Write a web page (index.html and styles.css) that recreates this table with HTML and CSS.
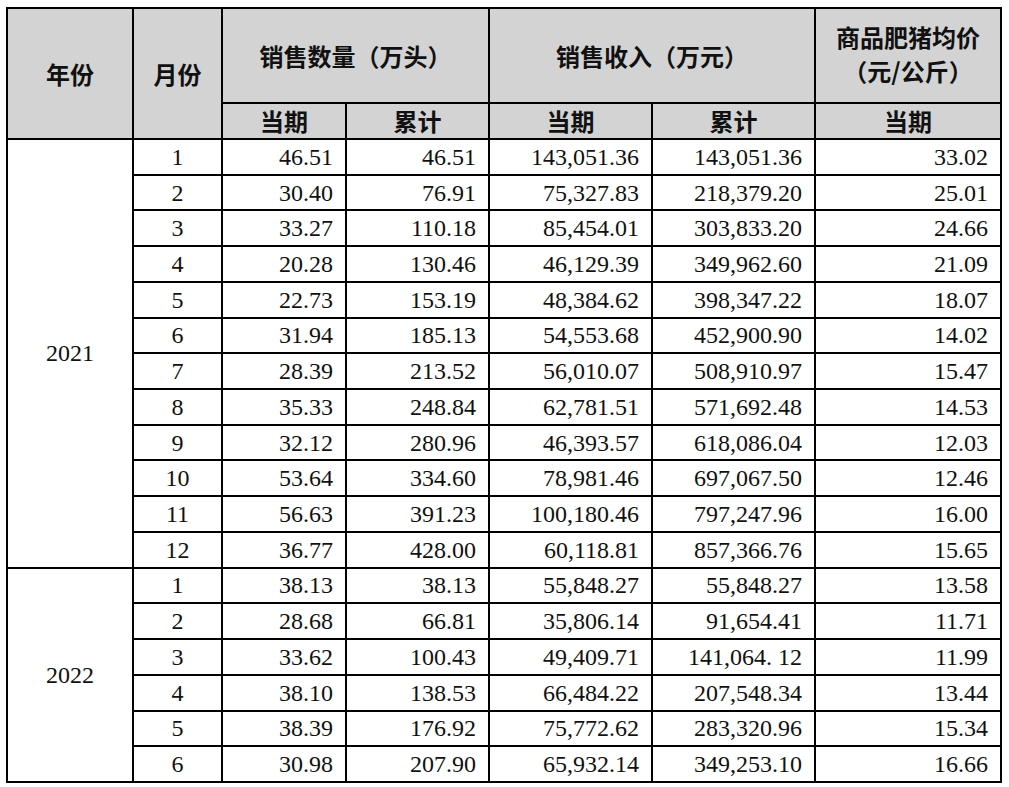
FILE: index.html
```html
<!DOCTYPE html>
<html lang="zh-CN">
<head>
<meta charset="utf-8">
<title>销售情况</title>
<link rel="stylesheet" href="styles.css">
</head>
<body>
<table class="sales">
  <colgroup>
    <col class="c-year"><col class="c-month"><col class="c-qty"><col class="c-qtysum"><col class="c-rev"><col class="c-revsum"><col class="c-price">
  </colgroup>
  <thead>
    <tr class="h1">
      <th rowspan="2">年份</th>
      <th rowspan="2">月份</th>
      <th colspan="2">销售数量（万头）</th>
      <th colspan="2">销售收入（万元）</th>
      <th class="two">商品肥猪均价<br>（元/公斤）</th>
    </tr>
    <tr class="h2">
      <th>当期</th>
      <th>累计</th>
      <th>当期</th>
      <th>累计</th>
      <th>当期</th>
    </tr>
  </thead>
  <tbody>
    <tr><td class="year" rowspan="12">2021</td><td class="m">1</td><td>46.51</td><td>46.51</td><td>143,051.36</td><td>143,051.36</td><td>33.02</td></tr>
    <tr><td class="m">2</td><td>30.40</td><td>76.91</td><td>75,327.83</td><td>218,379.20</td><td>25.01</td></tr>
    <tr><td class="m">3</td><td>33.27</td><td>110.18</td><td>85,454.01</td><td>303,833.20</td><td>24.66</td></tr>
    <tr><td class="m">4</td><td>20.28</td><td>130.46</td><td>46,129.39</td><td>349,962.60</td><td>21.09</td></tr>
    <tr><td class="m">5</td><td>22.73</td><td>153.19</td><td>48,384.62</td><td>398,347.22</td><td>18.07</td></tr>
    <tr><td class="m">6</td><td>31.94</td><td>185.13</td><td>54,553.68</td><td>452,900.90</td><td>14.02</td></tr>
    <tr><td class="m">7</td><td>28.39</td><td>213.52</td><td>56,010.07</td><td>508,910.97</td><td>15.47</td></tr>
    <tr><td class="m">8</td><td>35.33</td><td>248.84</td><td>62,781.51</td><td>571,692.48</td><td>14.53</td></tr>
    <tr><td class="m">9</td><td>32.12</td><td>280.96</td><td>46,393.57</td><td>618,086.04</td><td>12.03</td></tr>
    <tr><td class="m">10</td><td>53.64</td><td>334.60</td><td>78,981.46</td><td>697,067.50</td><td>12.46</td></tr>
    <tr><td class="m">11</td><td>56.63</td><td>391.23</td><td>100,180.46</td><td>797,247.96</td><td>16.00</td></tr>
    <tr><td class="m">12</td><td>36.77</td><td>428.00</td><td>60,118.81</td><td>857,366.76</td><td>15.65</td></tr>
    <tr><td class="year" rowspan="6">2022</td><td class="m">1</td><td>38.13</td><td>38.13</td><td>55,848.27</td><td>55,848.27</td><td>13.58</td></tr>
    <tr><td class="m">2</td><td>28.68</td><td>66.81</td><td>35,806.14</td><td>91,654.41</td><td>11.71</td></tr>
    <tr><td class="m">3</td><td>33.62</td><td>100.43</td><td>49,409.71</td><td>141,064. 12</td><td>11.99</td></tr>
    <tr><td class="m">4</td><td>38.10</td><td>138.53</td><td>66,484.22</td><td>207,548.34</td><td>13.44</td></tr>
    <tr><td class="m">5</td><td>38.39</td><td>176.92</td><td>75,772.62</td><td>283,320.96</td><td>15.34</td></tr>
    <tr><td class="m">6</td><td>30.98</td><td>207.90</td><td>65,932.14</td><td>349,253.10</td><td>16.66</td></tr>
  </tbody>
</table>
</body>
</html>
```
FILE: styles.css
```css
html, body {
  margin: 0;
  padding: 0;
  background: #ffffff;
}

.sales {
  margin: 7px 0 0 6px;
  box-sizing: border-box;
  width: 996px;
  table-layout: fixed;
  border-collapse: separate;
  border-spacing: 0;
  border-left: 2px solid #000;
  border-top: 2px solid #000;
  font-family: "Liberation Serif", "Times New Roman", "Noto Sans CJK SC", serif;
  font-size: 24px;
  color: #111;
}

.c-year { width: 126px; }
.c-month { width: 89px; }
.c-qty { width: 124px; }
.c-qtysum { width: 143px; }
.c-rev { width: 163px; }
.c-revsum { width: 163px; }
.c-price { width: 186px; }

.sales th,
.sales td {
  border-right: 2px solid #000;
  border-bottom: 2px solid #000;
  padding: 0;
  vertical-align: middle;
  box-sizing: border-box;
}

.sales th {
  background: #d3d3d3;
  font-family: "Noto Sans CJK SC", "Noto Sans CJK JP", sans-serif;
  font-weight: 700;
  font-size: 24px;
  color: #111;
  text-align: center;
  line-height: 34px;
}

.sales th.two {
  padding-bottom: 4px;
}

.h1 { height: 95px; }
.h2 { height: 35px; }

.sales tbody tr { height: 35.72px; }

.sales td {
  text-align: right;
  padding-right: 12px;
  line-height: 26px;
}

.sales td.m,
.sales td.year {
  text-align: center;
  padding-right: 0;
}
```
